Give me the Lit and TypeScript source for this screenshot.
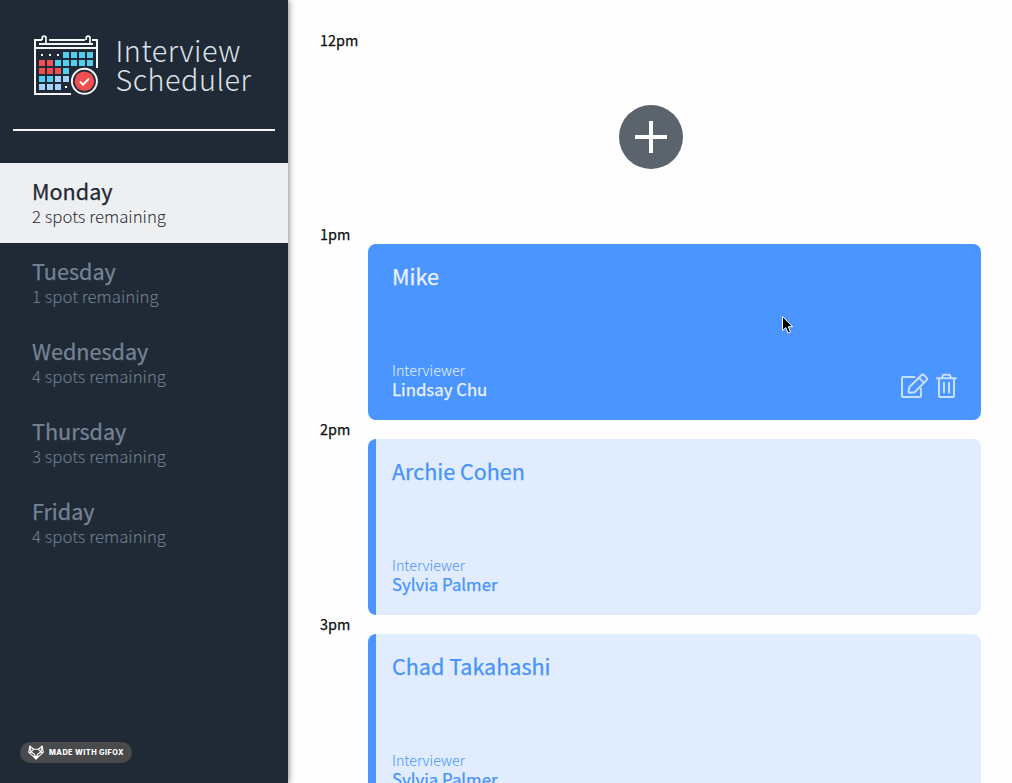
import { LitElement, html, svg, css } from "lit";
import { customElement, property } from "lit/decorators.js";
import { classMap } from "lit/directives/class-map.js";

const CELLS = ["...cccc", "rrccccc", "rrrc", "ccbb", "bbb."];
const CELL_COLORS: Record<string, string> = { c: "#50d0ec", r: "#f0504f", b: "#a5d2fd" };

@customElement("calendar-logo")
class CalendarLogo extends LitElement {
  static styles = css`
    :host { display: block; width: 68px; height: 66px; }
    svg { display: block; }
  `;
  render() {
    return html`<svg width="68" height="66" viewBox="0 0 68 66" fill="none">
      <path stroke="#f4f6f8" stroke-width="2" d="M39 62H3V8H10M17 8H53M60 8H65V36M3 16H65M7 12H61"/>
      <path stroke="#f4f6f8" stroke-width="1.7" d="M10.2 8V6a1.9 1.9 0 0 1 3.8 0V11M54.2 8V6a1.9 1.9 0 0 1 3.8 0V11"/>
      ${CELLS.map((row, r) =>
        [...row].map((c, i) =>
          c === "."
            ? svg`<rect x=${9 + i * 8} y=${22 + r * 8} width="2" height="2" fill="#fff"/>`
            : svg`<rect x=${7 + i * 8} y=${20 + r * 8} width="6" height="6" fill=${CELL_COLORS[c]}/>`
        )
      )}
      <circle cx="52.4" cy="49.3" r="12.5" fill="#1f2a36" stroke="#f4f6f8" stroke-width="2"/>
      <circle cx="52.4" cy="49.3" r="9.8" fill="#f0504f"/>
      <path stroke="#fff" stroke-width="2" d="M48 49.6l3 3 6-6"/>
    </svg>`;
  }
}

@customElement("day-item")
class DayItem extends LitElement {
  @property() name = "";
  @property() spots = "";
  @property({ type: Boolean, reflect: true }) selected = false;
  static styles = css`
    :host { display: block; box-sizing: border-box; height: 80px; padding: 15px 32px 0; color: #748394; }
    :host([selected]) { background: #eeeff0; color: #1f2a36; }
    .name { font-size: 21.6px; line-height: 26px; font-weight: 400; margin: 0; -webkit-text-stroke: 0.25px currentColor; }
    .spots { font-size: 16.8px; line-height: 24px; font-weight: 300; }
  `;
  render() {
    return html`<h2 class="name">${this.name}</h2><div class="spots">${this.spots}</div>`;
  }
}

@customElement("appointment-slot")
class AppointmentSlot extends LitElement {
  @property() time = "";
  @property() student = "";
  @property() interviewer = "";
  @property({ type: Boolean }) active = false;
  static styles = css`
    :host { display: block; height: 194.67px; }
    .time { font-size: 14.4px; line-height: 18px; height: 18.9px; font-weight: 400; color: #0b0d10; -webkit-text-stroke: 0.25px currentColor; }
    .card { margin-left: 48px; height: 176px; box-sizing: border-box; border-radius: 8px; background: #e1ecff;
      border-left: 8px solid #4a95ff; color: #4793fa; padding: 18px 24px 21px 16px;
      display: flex; flex-direction: column; justify-content: space-between; }
    .active { background: #4a95ff; color: #edf2fc; }
    .student { font-size: 21.55px; line-height: 28px; font-weight: 400; margin: 0; -webkit-text-stroke: 0.25px currentColor; }
    .foot { display: flex; justify-content: space-between; align-items: flex-end; }
    .role { font-size: 14.3px; line-height: 18px; font-weight: 300; }
    .who { font-size: 16.8px; line-height: 20px; font-weight: 400; -webkit-text-stroke: 0.25px currentColor; }
    .empty { height: 177px; display: flex; align-items: center; margin: -1px 0 0 48px; justify-content: center; padding-right: 47px; box-sizing: border-box; }
    .icons { display: block; }
    svg { display: block; }
  `;
  render() {
    return html`
      <div class="time">${this.time}</div>
      ${this.student
        ? html`<div class=${classMap({ card: true, active: this.active })}>
            <h2 class="student">${this.student}</h2>
            <div class="foot">
              <div><div class="role">Interviewer</div><div class="who">${this.interviewer}</div></div>
              ${this.active
                ? html`<svg class="icons" width="57" height="26" viewBox="0 0 57 26" fill="none" stroke="#c8defd" stroke-width="2" stroke-linejoin="round" stroke-linecap="round">
                    <path d="M14.5 4H3a1 1 0 0 0-1 1V23a1 1 0 0 0 1 1H20a1 1 0 0 0 1-1V15.5"/>
                    <path d="M9.3 14.2L21.3 2.3a2 2 0 0 1 2.8 0L26.4 4.6a2 2 0 0 1 0 2.8L14.5 19.2L9.6 19.8a1 1 0 0 1-1.1-1.1ZM19 4.6L24 9.7"/>
                    <path d="M37 5.2H56M39 5.2V22.5a1.5 1.5 0 0 0 1.5 1.5H52.5a1.5 1.5 0 0 0 1.5-1.5V5.2M41.8 5L43 2.3a1 1 0 0 1 .8-.5H49.2a1 1 0 0 1 .8.5L51.2 5M44 9.8V19.5M49 9.8V19.5"/>
                  </svg>`
                : ""}
            </div>
          </div>`
        : html`<div class="empty"><svg width="64" height="64" viewBox="0 0 64 64">
            <circle cx="32" cy="32" r="32" fill="#5b646d"/>
            <path stroke="#fff" stroke-width="4" d="M16 32H48M32 16V48"/>
          </svg></div>`}
    `;
  }
}

@customElement("app-root")
class AppRoot extends LitElement {
  static styles = css`
    :host { display: flex; position: relative; width: 1012px; height: 783px; overflow: hidden; background: #fefefe;
      font-family: "Noto Sans CJK SC", "Noto Sans", sans-serif; }
    .sidebar { width: 288px; flex: none; display: flex; flex-direction: column; background: #1f2a36; box-shadow: 1px 0 6px rgba(31, 42, 64, 0.55); }
    .brand { height: 129px; box-sizing: border-box; padding: 32px 0 0 32px; display: flex; gap: 15.5px; }
    .title { font-size: 28.8px; line-height: 29px; font-weight: 200; color: #dfe2e6; margin: 3px 0 0; letter-spacing: 0.5px; }
    .rule { height: 2px; background: #f6f7f8; margin: 0 13px 32px; }
    .badge { margin: auto 0 20px 20px; width: 112px; height: 21px; box-sizing: border-box; border-radius: 11px; background: #484a4c;
      display: flex; align-items: center; gap: 5px; padding-left: 8px; color: #fff; white-space: nowrap;
      font: 800 7.3px/21px Inter, sans-serif; letter-spacing: 0.45px; }
    .schedule { flex: 1; padding: 30.7px 31px 0 32px; }
    .cursor { position: absolute; left: 781px; top: 315px; }
  `;
  render() {
    return html`
      <aside class="sidebar">
        <div class="brand">
          <calendar-logo></calendar-logo>
          <h1 class="title">Interview<br />Scheduler</h1>
        </div>
        <div class="rule"></div>
        <nav>
          <day-item name="Monday" spots="2 spots remaining" selected></day-item>
          <day-item name="Tuesday" spots="1 spot remaining"></day-item>
          <day-item name="Wednesday" spots="4 spots remaining"></day-item>
          <day-item name="Thursday" spots="3 spots remaining"></day-item>
          <day-item name="Friday" spots="4 spots remaining"></day-item>
        </nav>
        <div class="badge">
          <svg width="16" height="15" viewBox="0 0 16 15" fill="none" stroke="#fff" stroke-width="1.1" stroke-linejoin="round">
            <path d="M1.7 1L5.7 4.2H10.3L14.3 1L15.2 7.3L11 11.2L8 14L5 11.2L.8 7.3ZM5.7 4.2L3.2 7L.8 7.3M10.3 4.2L12.8 7L15.2 7.3M3.2 7L6.5 9.3L8 14L9.5 9.3L12.8 7M1.7 1L3.2 7M14.3 1L12.8 7"/>
            <path d="M6 11.3H10L8 14Z" fill="#fff"/>
          </svg>
          <span>MADE WITH GIFOX</span>
        </div>
      </aside>
      <main class="schedule">
        <appointment-slot time="12pm"></appointment-slot>
        <appointment-slot time="1pm" student="Mike" interviewer="Lindsay Chu" active></appointment-slot>
        <appointment-slot time="2pm" student="Archie Cohen" interviewer="Sylvia Palmer"></appointment-slot>
        <appointment-slot time="3pm" student="Chad Takahashi" interviewer="Sylvia Palmer"></appointment-slot>
      </main>
      <svg class="cursor" width="13" height="20" viewBox="0 0 13 20">
        <path d="M1.5 1.5V15.5L4.8 12.5L7 18L9.5 17L7.3 11.7H11.5Z" fill="#000" stroke="#fff" stroke-width="1"/>
      </svg>
    `;
  }
}
